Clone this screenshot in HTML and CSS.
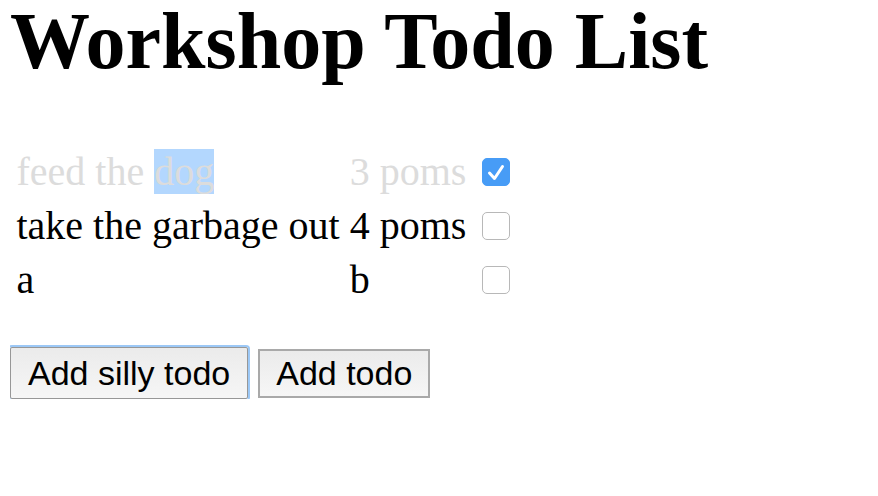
FILE: index.html
```html
<!DOCTYPE html>
<html lang="en">
<head>
<meta charset="utf-8">
<title>Workshop Todo List</title>
<link rel="stylesheet" href="styles.css">
</head>
<body>
  <h1 class="title">Workshop Todo List</h1>
  <table class="todos">
    <tbody>
      <tr class="todo todo--done">
        <td class="todo__name">feed the <span class="selected">dog</span></td>
        <td class="todo__poms">3 poms</td>
        <td class="todo__check"><span class="checkbox checkbox--checked" role="checkbox" aria-checked="true"><svg viewBox="0 0 28 28" width="28" height="28"><polyline points="7.5,15 12.5,20.5 20.5,8.5" fill="none" stroke="#fff" stroke-width="3" stroke-linecap="round" stroke-linejoin="round"/></svg></span></td>
      </tr>
      <tr class="todo">
        <td class="todo__name">take the garbage out</td>
        <td class="todo__poms">4 poms</td>
        <td class="todo__check"><span class="checkbox" role="checkbox" aria-checked="false"></span></td>
      </tr>
      <tr class="todo">
        <td class="todo__name">a</td>
        <td class="todo__poms">b</td>
        <td class="todo__check"><span class="checkbox" role="checkbox" aria-checked="false"></span></td>
      </tr>
    </tbody>
  </table>
  <div class="actions">
    <button class="btn btn--focused" type="button">Add silly todo</button>
    <button class="btn" type="button">Add todo</button>
  </div>
</body>
</html>
```
FILE: styles.css
```css
html, body {
  background: #fff;
}
body {
  margin: 0 10px;
  font-family: "Liberation Serif", "Times New Roman", serif;
  font-size: 40px;
  color: #000;
}
.title {
  margin: 0 0 60px;
  font-size: 80px;
  line-height: 82px;
  font-weight: bold;
}
.todos {
  border-spacing: 5px;
  margin-left: -1px;
}
.todos td {
  padding: 2.5px;
  line-height: 44px;
  white-space: nowrap;
}
.todo--done .todo__name,
.todo--done .todo__poms {
  color: #dcdcdc;
}
.selected {
  background: #b3d7fe;
}
.checkbox {
  display: inline-block;
  box-sizing: border-box;
  width: 28px;
  height: 28px;
  margin-left: 6px;
  vertical-align: -1px;
  border: 1px solid #b8b8b8;
  border-radius: 5px;
  background: #fff;
}
.checkbox svg {
  display: block;
  margin: -1px;
}
.checkbox--checked {
  border-color: #479cf6;
  background: #479cf6;
}
.actions {
  display: flex;
  gap: 10px;
  align-items: center;
  margin-top: 38px;
}
.btn {
  box-sizing: border-box;
  height: 49px;
  margin: 0;
  padding: 0 16px;
  font-family: "Liberation Sans", Arial, sans-serif;
  font-size: 34px;
  line-height: 45px;
  color: #000;
  border: 2px solid #a9a9a9;
  border-radius: 0;
  background: linear-gradient(#ebebeb, #f6f6f6);
}
.btn--focused {
  height: 52px;
  border: 1px solid #979797;
  padding: 0 17px;
  box-shadow: 0 0 0 2px #9cc8f6;
  border-radius: 2px;
}
```
